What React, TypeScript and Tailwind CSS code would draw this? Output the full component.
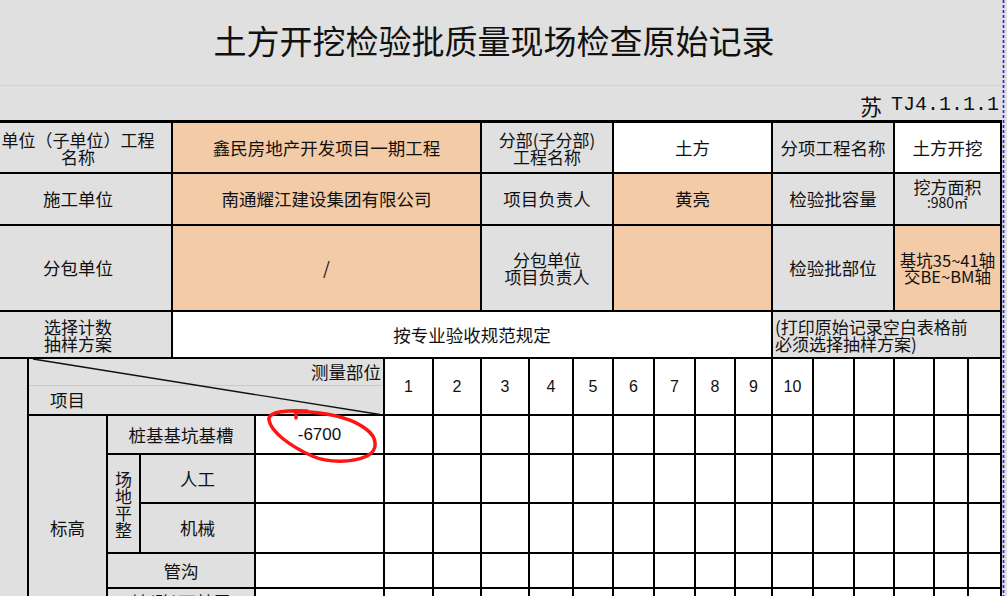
import React from "react";

const G = "bg-[#e0e0e0]";
const P = "bg-[#f3cba6]";
const W = "bg-white";
const C = "flex items-center justify-center text-center whitespace-nowrap";

export default function App() {
  const nums = ["1", "2", "3", "4", "5", "6", "7", "8", "9", "10", "", "", "", "", ""];
  const blank16 = Array.from({ length: 16 });
  const blank15 = Array.from({ length: 15 });
  return (
    <div className="relative w-[1007px] h-[596px] overflow-hidden bg-[#e0e0e0] text-[#111] font-['Noto_Sans_CJK_SC',sans-serif] text-[17.5px] leading-[18px]">
      {/* title */}
      <div className="h-[86px] border-b border-[#d6d2ca] flex items-center justify-center pr-[19px] pb-[6px]">
        <h1 className="text-[33px] leading-[40px] font-normal">土方开挖检验批质量现场检查原始记录</h1>
      </div>
      <div className="h-[34px] flex items-center justify-end pr-[8px] pt-[4px]">
        <span className="text-[22px] leading-[24px]">苏</span>
        <span className="ml-[9px] font-['Liberation_Mono',monospace] text-[20px] leading-[24px]">TJ4.1.1.1</span>
      </div>

      {/* top info table */}
      <div className="ml-[-17px] w-[1019px] bg-black pt-[3px] px-[2px] pb-[2px] grid grid-cols-[186px_307px_130px_157px_120px_105px] grid-rows-[49px_50px_84px_45px] gap-[2px]">
        <div className={`${G} ${C} text-[17px] leading-[17px]`}>单位（子单位）工程<br />名称</div>
        <div className={`${P} ${C}`}>鑫民房地产开发项目一期工程</div>
        <div className={`${G} ${C} text-[17px] leading-[17px]`}>分部(子分部)<br />工程名称</div>
        <div className={`${W} ${C}`}>土方</div>
        <div className={`${G} ${C}`}>分项工程名称</div>
        <div className={`${W} ${C}`}>土方开挖</div>

        <div className={`${G} ${C}`}>施工单位</div>
        <div className={`${P} ${C}`}>南通耀江建设集团有限公司</div>
        <div className={`${G} ${C}`}>项目负责人</div>
        <div className={`${P} ${C}`}>黄亮</div>
        <div className={`${G} ${C}`}>检验批容量</div>
        <div className={`${G} ${C} flex-col pb-[12px]`}>
          <span className="text-[17px] leading-[17px]">挖方面积</span>
          <span className="text-[14px] leading-[14px]">:980㎡</span>
        </div>

        <div className={`${G} ${C}`}>分包单位</div>
        <div className={`${P} ${C}`}>/</div>
        <div className={`${G} ${C} text-[17px] leading-[17px]`}>分包单位<br />项目负责人</div>
        <div className={`${P}`}></div>
        <div className={`${G} ${C}`}>检验批部位</div>
        <div className={`${P} ${C} text-[16.5px] leading-[16.5px]`}>基坑35~41轴<br />交BE~BM轴</div>

        <div className={`${G} ${C} text-[17px] leading-[17px]`}>选择计数<br />抽样方案</div>
        <div className={`${W} ${C} col-span-3`}>按专业验收规范规定</div>
        <div className={`${G} col-span-2 flex items-center whitespace-nowrap pl-[2px] text-[17px] leading-[17px]`}>
          (打印原始记录空白表格前<br />必须选择抽样方案)
        </div>
      </div>

      {/* measurement table */}
      <div className="ml-[-17px] w-[1019px] bg-black px-[2px] grid grid-cols-[42px_77px_31px_113px_127px_47px_46px_46px_42px_38px_39px_39px_38px_35px_39px_39px_38px_38px_32px_31px] grid-rows-[55px_37px_47px_48px_33px_50px] gap-[2px]">
        <div className={`${G} row-span-6`}></div>
        <div className={`${G} col-span-4 flex flex-col`}>
          <div className="h-[27px] border-b border-[#cfc9c1] flex items-center justify-end pr-[2px]">测量部位</div>
          <div className="flex-1 flex items-center pl-[21px]">项目</div>
        </div>
        {nums.map((n, i) => (
          <div key={i} className={`${W} ${C} font-['Liberation_Sans',sans-serif] text-[16px]`}>{n}</div>
        ))}

        <div className={`${G} ${C} row-span-5`}>标高</div>
        <div className={`${G} ${C} col-span-2`}>桩基基坑基槽</div>
        <div className={`${W} ${C} font-['Liberation_Sans',sans-serif] text-[17px]`}>-6700</div>
        {blank15.map((_, i) => (
          <div key={`a${i}`} className={W}></div>
        ))}

        <div className={`${G} row-span-2 flex flex-col items-center justify-center text-[17px] leading-[17px]`}>
          <span>场</span>
          <span>地</span>
          <span>平</span>
          <span>整</span>
        </div>
        <div className={`${G} ${C}`}>人工</div>
        {blank16.map((_, i) => (
          <div key={`b${i}`} className={W}></div>
        ))}

        <div className={`${G} ${C}`}>机械</div>
        {blank16.map((_, i) => (
          <div key={`c${i}`} className={W}></div>
        ))}

        <div className={`${G} ${C} col-span-2`}>管沟</div>
        {blank16.map((_, i) => (
          <div key={`d${i}`} className={W}></div>
        ))}

        <div className={`${G} col-span-2 flex justify-center items-start pt-[4px] whitespace-nowrap`}>地(路)面基层</div>
        {blank16.map((_, i) => (
          <div key={`e${i}`} className={W}></div>
        ))}
      </div>

      {/* overlays: diagonal, annotation, page break line */}
      <svg className="absolute left-0 top-0 pointer-events-none" width="1007" height="596" viewBox="0 0 1007 596">
        <line x1="33" y1="359" x2="380" y2="414.5" stroke="#111" strokeWidth="1.4" />
        <path
          d="M 307 411 C 290 410, 267 411, 269 420 C 271 432, 290 446, 312 456 C 328 463, 352 463, 367 456 C 379 450, 377 437, 366 429 C 353 419, 334 414, 310 412 L 296 412 L 296 418"
          fill="none"
          stroke="#ff1414"
          strokeWidth="3.5"
          strokeLinecap="round"
          strokeLinejoin="round"
        />
        <line x1="1003.5" y1="0" x2="1003.5" y2="596" stroke="#2424f0" strokeWidth="1.6" strokeDasharray="3 2" />
      </svg>
    </div>
  );
}
